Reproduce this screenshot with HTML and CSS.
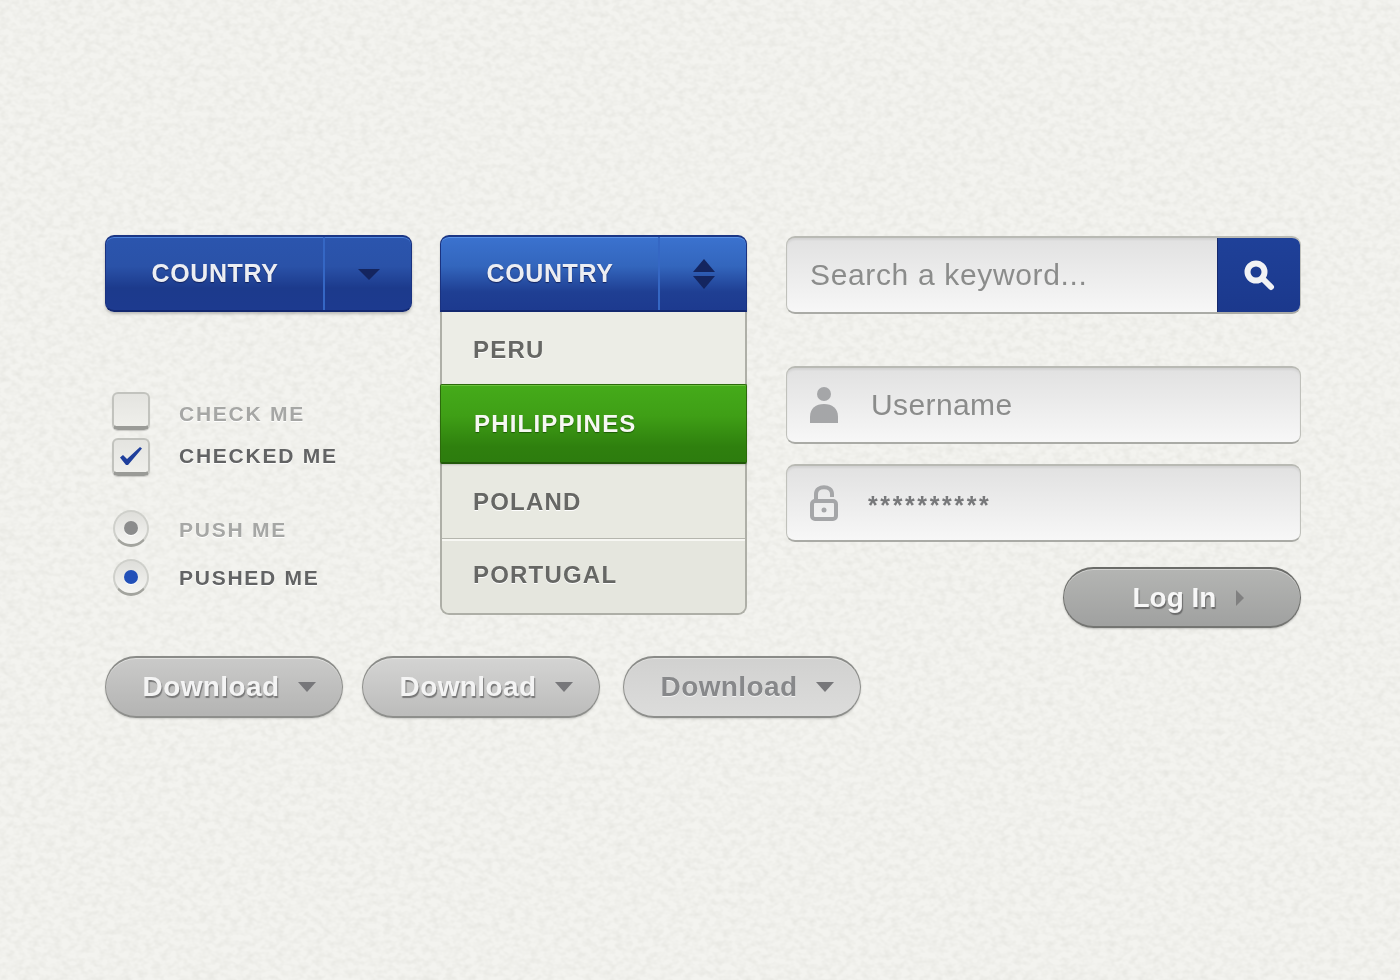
FILE: index.html
```html
<!DOCTYPE html>
<html lang="en">

<head>
    <meta charset="UTF-8">
    <meta name="viewport" content="width=device-width, initial-scale=1.0">
    <title>UI Kit</title>
    <link rel="stylesheet" href="styles.css">
</head>

<body>
    <!-- paper texture behind everything -->
    <svg class="paper" width="1400" height="980" aria-hidden="true">
        <filter id="grain" x="0" y="0" width="100%" height="100%">
            <feTurbulence type="fractalNoise" baseFrequency="0.13 0.17" numOctaves="2" seed="7" />
            <feColorMatrix type="matrix" values="0 0 0 0 0.6  0 0 0 0 0.6  0 0 0 0 0.55  0.55 0 0 0 -0.2" />
        </filter>
        <rect width="1400" height="980" filter="url(#grain)" />
    </svg>

    <div class="kit">
        <div class="top">
            <div class="col-left">
                <div class="select select-dark">
                    <span class="select-label">COUNTRY</span>
                    <span class="select-arrow">
                        <svg width="24" height="14" viewBox="0 0 24 14">
                            <path class="tri" d="M1 2h22L12 13z" />
                        </svg>
                    </span>
                </div>

                <div class="options">
                    <div class="option">
                        <span class="box"></span>
                        <span class="opt-label">CHECK ME</span>
                    </div>
                    <div class="option on">
                        <span class="box">
                            <svg width="24" height="20" viewBox="0 0 24 20">
                                <path d="M1 11.5l3-2.5 4 4L21 1l2 1.5L9 19h-2z" fill="#1f3f9c" />
                            </svg>
                        </span>
                        <span class="opt-label">CHECKED ME</span>
                    </div>
                    <div class="option radio-first">
                        <span class="radio"><i></i></span>
                        <span class="opt-label">PUSH ME</span>
                    </div>
                    <div class="option on radio-second">
                        <span class="radio blue"><i></i></span>
                        <span class="opt-label">PUSHED ME</span>
                    </div>
                </div>
            </div>

            <div class="col-mid">
                <div class="select select-open">
                    <span class="select-label">COUNTRY</span>
                    <span class="select-arrow">
                        <svg width="24" height="32" viewBox="0 0 24 32">
                            <path class="tri" d="M12 1l11 13H1z" />
                            <path class="tri" d="M1 18h22L12 31z" />
                        </svg>
                    </span>
                </div>
                <ul class="menu">
                    <li class="peru">PERU</li>
                    <li class="active">PHILIPPINES</li>
                    <li class="poland">POLAND</li>
                    <li class="portugal">PORTUGAL</li>
                </ul>
            </div>

            <div class="col-right">
                <div class="field search">
                    <span class="search-text">Search a keyword...</span>
                    <span class="search-btn">
                        <svg width="32" height="32" viewBox="0 0 32 32">
                            <circle cx="13" cy="13" r="8.5" fill="none" stroke="#f1f2f5" stroke-width="6" />
                            <path d="M20 20l8 8" stroke="#f1f2f5" stroke-width="6" stroke-linecap="round" />
                        </svg>
                    </span>
                </div>

                <div class="login">
                    <div class="field">
                        <svg class="field-icon" width="28" height="36" viewBox="0 0 28 36">
                            <circle cx="14" cy="7" r="7" fill="#a5a6a8" />
                            <path d="M0 36v-6c0-9 6-13 14-13s14 4 14 13v6z" fill="#a5a6a8" />
                        </svg>
                        <span class="field-text">Username</span>
                    </div>
                    <div class="field">
                        <svg class="field-icon" width="28" height="36" viewBox="0 0 28 36">
                            <path d="M6 15V9c0-9 16-9 16 0v3" fill="none" stroke="#a5a6a8" stroke-width="4" />
                            <rect x="2" y="16" width="24" height="18" rx="3" fill="none" stroke="#a5a6a8" stroke-width="4" />
                            <circle cx="14" cy="25" r="2.5" fill="#a5a6a8" />
                        </svg>
                        <span class="field-stars">**********</span>
                    </div>
                </div>

                <div class="pill pill-login">
                    <span class="pill-text">Log In</span>
                    <svg width="10" height="18" viewBox="0 0 10 18">
                        <path d="M1 1l8 8-8 8z" fill="#808080" />
                    </svg>
                </div>
            </div>
        </div>

        <div class="downloads">
            <div class="pill dl">
                <span class="pill-text">Download</span>
                <svg width="18" height="10" viewBox="0 0 18 10"><path d="M0 0h18l-9 10z" fill="#77777a" /></svg>
            </div>
            <div class="pill dl dl-hover">
                <span class="pill-text">Download</span>
                <svg width="18" height="10" viewBox="0 0 18 10"><path d="M0 0h18l-9 10z" fill="#77777a" /></svg>
            </div>
            <div class="pill dl dl-off">
                <span class="pill-text">Download</span>
                <svg width="18" height="10" viewBox="0 0 18 10"><path d="M0 0h18l-9 10z" fill="#77777a" /></svg>
            </div>
        </div>
    </div>
</body>

</html>
```

FILE: styles.css
```css
html, body {
    margin: 0;
    height: 980px;
    overflow: hidden;
}

body {
    background-color: #f3f3ef;
    font-family: 'Liberation Sans', Arial, sans-serif;
    position: relative;
}

.paper {
    position: absolute;
    top: 0;
    left: 0;
}

.kit {
    position: relative;
    padding: 235px 0 0 105px;
    filter: blur(0.45px);
}

.top {
    display: flex;
    align-items: flex-start;
}

.col-left, .col-mid {
    width: 307px;
}

.col-left {
    margin-right: 28px;
}

.col-mid {
    margin-right: 39px;
}

.col-right {
    width: 515px;
    display: flex;
    flex-direction: column;
    padding-top: 1px;
}

/* country select */
.select {
    display: flex;
    height: 77px;
    box-sizing: border-box;
    border-radius: 9px;
    border: 1px solid #1a3280;
    border-top: 2px solid #1b3685;
    border-bottom: 2px solid #13286f;
    color: #eceef3;
    font-size: 25px;
    font-weight: bold;
    letter-spacing: 0.6px;
    text-shadow: 0 1px 1px #14245f;
    box-shadow: inset 0 1px 0 #4d84dc, 0 2px 3px #0000003a;
}

.select-dark {
    background: linear-gradient(#2b55ae, #2a52a8 40%, #1c3a8c 70%, #1d3a8f);
}

.select-open {
    background: linear-gradient(#3b72cf, #3366bd 40%, #1f3f93 75%, #1d3a8f);
    border-radius: 9px 9px 0 0;
    box-shadow: inset 0 1px 0 #5a93e6, 0 2px 2px #0000002e;
}

.select-label {
    width: 217px;
    padding-left: 1px;
    box-sizing: border-box;
    display: flex;
    align-items: center;
    justify-content: center;
}

.select-arrow {
    flex: 1;
    display: flex;
    align-items: center;
    justify-content: center;
    padding-left: 2px;
    border-left: 2px solid #3567c4;
}

.tri {
    fill: #14255f;
}

/* checks and radios */
.options {
    margin-top: 80px;
    padding-left: 7px;
    display: flex;
    flex-direction: column;
    gap: 8px;
}

.option {
    display: flex;
    align-items: center;
    height: 38px;
    gap: 29px;
}

.opt-label {
    font-size: 21px;
    font-weight: bold;
    letter-spacing: 1.75px;
    color: #a6a7a5;
    text-shadow: 0 1px 0 #fff;
    margin-top: 5px;
}

.option.on .opt-label {
    color: #626364;
    margin-top: -2px;
}

.radio-first .opt-label {
    margin-top: 3px;
}

.radio-second .opt-label,
.option.on.radio-second .opt-label {
    margin-top: 2px;
}

.box {
    width: 38px;
    height: 38px;
    box-sizing: border-box;
    display: flex;
    align-items: center;
    justify-content: center;
    border: 2px solid #c2c3be;
    border-bottom: 4px solid #9a9b97;
    border-radius: 6px;
    background: linear-gradient(#e4e4e0, #efefeb);
    box-shadow: 0 1px 1px #0000002a;
}

.radio-first {
    margin-top: 25px;
}

.radio-second {
    margin-top: 3px;
}

.radio {
    width: 36px;
    height: 37px;
    margin: 0 1px;
    box-sizing: border-box;
    display: flex;
    align-items: center;
    justify-content: center;
    border: 2px solid #cfd0cb;
    border-bottom: 3px solid #a3a49e;
    border-radius: 50%;
    background: linear-gradient(#dededa, #f6f6f3);
}

.radio i {
    width: 14px;
    height: 14px;
    border-radius: 50%;
    background: #8b8c8c;
    box-shadow: 0 1px 1px #fff;
}

.radio.blue i {
    background: #2250b8;
}

/* dropdown list */
.menu {
    list-style: none;
    margin: 0;
    padding: 0;
    box-sizing: border-box;
    border: 2px solid #aeafa7;
    border-top: 0;
    border-radius: 0 0 9px 9px;
    background: #e8e9e1;
    font-size: 24px;
    font-weight: bold;
    letter-spacing: 1.2px;
    color: #666764;
    text-shadow: 0 1px 0 #fff;
}

.menu li {
    display: flex;
    align-items: center;
    padding-left: 31px;
    box-sizing: border-box;
}

.menu .peru {
    height: 72px;
    padding-top: 3px;
    background: #ecede6;
}

.menu .active {
    height: 80px;
    margin: 0 -2px;
    padding-left: 33px;
    border: 1px solid #2c6b0b;
    border-bottom: 2px solid #22590a;
    border-radius: 2px;
    background: linear-gradient(#45ab1a, #3f9f16 40%, #2f800e 80%, #2d7c0e);
    box-shadow: inset 0 1px 0 #6cc23f, 0 1px 2px #0000002a;
    color: #f6f8f2;
    text-shadow: 0 1px 1px #1f5a08;
}

.menu .poland {
    height: 75px;
    border-bottom: 1px solid #b5b6ae;
    padding-top: 1px;
}

.menu .portugal {
    height: 74px;
    border-top: 2px solid #f7f7f3;
    padding-bottom: 4px;
    background: #e5e6de;
    border-radius: 0 0 8px 8px;
}

/* input fields */
.field {
    display: flex;
    align-items: center;
    height: 78px;
    box-sizing: border-box;
    border: 1px solid #c0c1bb;
    border-top: 2px solid #b9bab4;
    border-bottom: 2px solid #aaaba6;
    border-radius: 9px;
    background: linear-gradient(#e1e1e1, #f7f7f7);
    box-shadow: inset 0 2px 2px #00000010;
    color: #8b8c8b;
    overflow: hidden;
}

.search-text {
    flex: 1;
    padding-left: 23px;
    font-size: 30px;
    letter-spacing: 0.65px;
}

.search-btn {
    width: 84px;
    height: 78px;
    display: flex;
    align-items: center;
    justify-content: center;
    background: linear-gradient(#1f4199, #1b388c);
    box-shadow: inset 1px 0 0 #16296c;
    margin-right: -1px;
}

.login {
    margin-top: 52px;
    display: flex;
    flex-direction: column;
    gap: 20px;
}

.field-icon {
    margin-left: 23px;
    width: 28px;
}

.field-text {
    margin-left: 33px;
    font-size: 30px;
    letter-spacing: 0.4px;
}

.field-stars {
    margin-left: 30px;
    margin-top: 4px;
    font-size: 25px;
    font-weight: bold;
    letter-spacing: 2.6px;
    color: #77787a;
}

/* pill buttons */
.pill {
    display: flex;
    align-items: center;
    justify-content: center;
    box-sizing: border-box;
    border-radius: 31px;
    font-weight: bold;
}

.pill-login {
    align-self: flex-end;
    margin-top: 25px;
    width: 238px;
    height: 61px;
    gap: 19px;
    padding-left: 14px;
    border: 1px solid #6f706d;
    border-top: 2px solid #6a6b68;
    border-bottom: 2px solid #747572;
    background: linear-gradient(#b4b5b3, #a0a1a0);
    box-shadow: inset 0 1px 0 #d3d3d1, 0 1px 2px #00000033;
    color: #f7f7f7;
    font-size: 28px;
    text-shadow: 1px 2px 1px #6b6b6b;
}

.downloads {
    display: flex;
    margin-top: 28px;
}

.dl {
    width: 238px;
    height: 62px;
    gap: 19px;
    padding-left: 11px;
    margin-right: 19px;
    border: 1px solid #8d8e8b;
    border-top: 2px solid #8a8b88;
    border-bottom: 2px solid #8e8f8c;
    background: linear-gradient(#cacac9, #b4b4b3);
    box-shadow: inset 0 1px 0 #e0e0de, 0 1px 2px #00000026;
    color: #f4f4f4;
    font-size: 28px;
    letter-spacing: 0.4px;
    text-shadow: 1px 2px 1px #777;
}

.dl-hover {
    margin-right: 23px;
    background: linear-gradient(#d4d4d3, #bcbcbb);
}

.dl-off {
    background: linear-gradient(#d1d1d0, #dcdcdb);
    color: #87888a;
    text-shadow: 0 1px 0 #f2f2f2;
}
```
